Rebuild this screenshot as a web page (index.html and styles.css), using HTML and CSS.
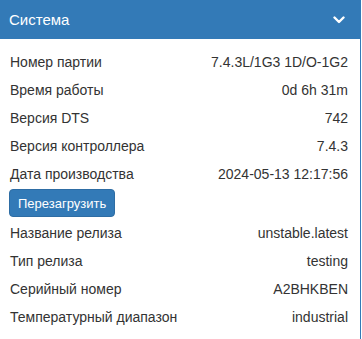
FILE: index.html
```html
<!DOCTYPE html>
<html lang="ru">
<head>
  <meta charset="UTF-8" />
  <title>Система</title>
  <link rel="stylesheet" href="styles.css">
</head>
<body>
  <div class="panel">
    <div class="panel-heading">
      <span>Система</span>
      <svg class="chevron" width="12" height="8" viewBox="0 0 12 8">
        <path d="M1.5 1.5 L6 6 L10.5 1.5" fill="none" stroke="#fff" stroke-width="2.4" stroke-linecap="round" stroke-linejoin="round"/>
      </svg>
    </div>
    <div class="panel-body">
      <div class="row"><span>Номер партии</span><span>7.4.3L/1G3 1D/O-1G2</span></div>
      <div class="row"><span>Время работы</span><span>0d 6h 31m</span></div>
      <div class="row"><span>Версия DTS</span><span>742</span></div>
      <div class="row"><span>Версия контроллера</span><span>7.4.3</span></div>
      <div class="row"><span>Дата производства</span><span>2024-05-13 12:17:56</span></div>
      <div class="actions"><button class="btn">Перезагрузить</button></div>
      <div class="row"><span>Название релиза</span><span>unstable.latest</span></div>
      <div class="row"><span>Тип релиза</span><span>testing</span></div>
      <div class="row"><span>Серийный номер</span><span>A2BHKBEN</span></div>
      <div class="row"><span>Температурный диапазон</span><span>industrial</span></div>
    </div>
  </div>
</body>
</html>
```

FILE: styles.css
```css
* {
  box-sizing: border-box;
}

body {
  margin: 0;
  font-family: "Liberation Sans", Arial, sans-serif;
  font-size: 14px;
  color: #333;
  background: #fff;
}

.panel {
  width: 362px;
  margin-left: -1px;
  border: 1px solid #337ab7;
  border-top: none;
}

.panel-heading {
  display: flex;
  align-items: center;
  justify-content: space-between;
  height: 39px;
  padding: 0 15px 0 9px;
  background: #337ab7;
  color: #fff;
  font-size: 15px;
}

.chevron {
  display: block;
}

.panel-body {
  padding: 9px 12px 10px 10px;
}

.row {
  display: flex;
  justify-content: space-between;
  align-items: center;
  height: 28px;
}

.actions {
  padding: 1px 0 2px;
}

.btn {
  font-family: inherit;
  font-size: 13px;
  color: #fff;
  background: #337ab7;
  border: 1px solid #2e6da4;
  border-radius: 4px;
  height: 28px;
  margin-left: -1px;
  padding: 0 8px;
  cursor: pointer;
}
```
